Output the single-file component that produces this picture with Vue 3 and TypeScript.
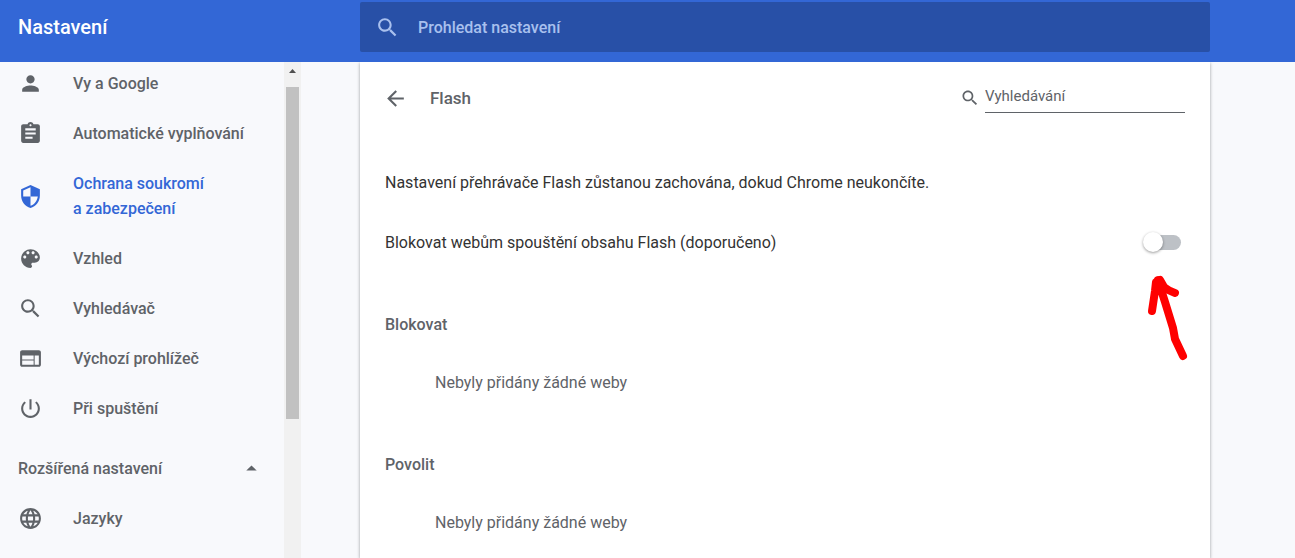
<script setup lang="ts">
import { ref } from 'vue'

interface NavItem {
  label: string
  icon: string
  active?: boolean
}

const searchIcon =
  'M15.5 14h-.79l-.28-.27C15.41 12.59 16 11.11 16 9.5 16 5.91 13.09 3 9.5 3S3 5.91 3 9.5 5.91 16 9.5 16c1.61 0 3.09-.59 4.23-1.57l.27.28v.79l5 4.99L20.49 19l-4.99-5zm-6 0C7.01 14 5 11.99 5 9.5S7.01 5 9.5 5 14 7.01 14 9.5 11.99 14 9.5 14z'

const items: NavItem[] = [
  {
    label: 'Vy a Google',
    icon: 'M12 12c2.21 0 4-1.79 4-4s-1.79-4-4-4-4 1.79-4 4 1.79 4 4 4zm0 2c-2.67 0-8 1.34-8 4v2h16v-2c0-2.66-5.33-4-8-4z',
  },
  {
    label: 'Automatické vyplňování',
    icon: 'M19 3h-4.18C14.4 1.84 13.3 1 12 1c-1.3 0-2.4.84-2.82 2H5c-1.1 0-2 .9-2 2v14c0 1.1.9 2 2 2h14c1.1 0 2-.9 2-2V5c0-1.1-.9-2-2-2zm-7 0c.55 0 1 .45 1 1s-.45 1-1 1-1-.45-1-1 .45-1 1-1zm2 14H7v-2h7v2zm3-4H7v-2h10v2zm0-4H7V7h10v2z',
  },
  {
    label: 'Ochrana soukromí a\u00a0zabezpečení',
    icon: 'M12 1L3 5v6c0 5.55 3.84 10.74 9 12 5.16-1.26 9-6.45 9-12V5l-9-4zm0 10.99h7c-.53 4.12-3.28 7.79-7 8.94V12H5V6.3l7-3.11v8.8z',
    active: true,
  },
  {
    label: 'Vzhled',
    icon: 'M12 3c-4.97 0-9 4.03-9 9s4.03 9 9 9c.83 0 1.5-.67 1.5-1.5 0-.39-.15-.74-.39-1.01-.23-.26-.38-.61-.38-.99 0-.83.67-1.5 1.5-1.5H16c2.76 0 5-2.24 5-5 0-4.42-4.03-8-9-8zm-5.5 9c-.83 0-1.5-.67-1.5-1.5S5.67 9 6.5 9 8 9.67 8 10.5 7.33 12 6.5 12zm3-4C8.67 8 8 7.33 8 6.5S8.67 5 9.5 5s1.5.67 1.5 1.5S10.33 8 9.5 8zm5 0c-.83 0-1.5-.67-1.5-1.5S13.67 5 14.5 5s1.5.67 1.5 1.5S15.33 8 14.5 8zm3 4c-.83 0-1.5-.67-1.5-1.5S16.67 9 17.5 9s1.5.67 1.5 1.5-.67 1.5-1.5 1.5z',
  },
  { label: 'Vyhledávač', icon: searchIcon },
  {
    label: 'Výchozí prohlížeč',
    icon: 'M20 4H4c-1.1 0-1.99.9-1.99 2L2 18c0 1.1.9 2 2 2h16c1.1 0 2-.9 2-2V6c0-1.1-.9-2-2-2zm-5 14H4v-4h11v4zm0-5H4V9h11v4zm5 5h-4V9h4v9z',
  },
  {
    label: 'Při spuštění',
    icon: 'M13 3h-2v10h2V3zm4.83 2.17l-1.42 1.42C17.99 7.86 19 9.81 19 12c0 3.87-3.13 7-7 7s-7-3.13-7-7c0-2.19 1.01-4.14 2.58-5.42L6.17 5.17C4.23 6.82 3 9.26 3 12c0 4.97 4.03 9 9 9s9-4.03 9-9c0-2.74-1.23-5.18-3.17-6.83z',
  },
]

const advanced: NavItem[] = [
  {
    label: 'Jazyky',
    icon: 'M11.99 2C6.47 2 2 6.48 2 12s4.47 10 9.99 10C17.52 22 22 17.52 22 12S17.52 2 11.99 2zm6.93 6h-2.95c-.32-1.25-.78-2.45-1.38-3.56 1.84.63 3.37 1.91 4.33 3.56zM12 4.04c.83 1.2 1.48 2.53 1.91 3.96h-3.82c.43-1.43 1.08-2.76 1.91-3.96zM4.26 14C4.1 13.36 4 12.69 4 12s.1-1.36.26-2h3.38c-.08.66-.14 1.32-.14 2s.06 1.34.14 2H4.26zm.82 2h2.95c.32 1.25.78 2.45 1.38 3.56-1.84-.63-3.37-1.9-4.33-3.56zm2.95-8H5.08c.96-1.66 2.49-2.93 4.33-3.56C8.81 5.55 8.35 6.75 8.03 8zM12 19.96c-.83-1.2-1.48-2.53-1.91-3.96h3.82c-.43 1.43-1.08 2.76-1.91 3.96zM14.34 14H9.66c-.09-.66-.16-1.32-.16-2s.07-1.35.16-2h4.68c.09.65.16 1.32.16 2s-.07 1.34-.16 2zm.25 5.56c.6-1.11 1.06-2.31 1.38-3.56h2.95c-.96 1.65-2.49 2.93-4.33 3.56zM16.36 14c.08-.66.14-1.32.14-2s-.06-1.34-.14-2h3.38c.16.64.26 1.31.26 2s-.1 1.36-.26 2h-3.38z',
  },
]

const siteLists = [
  { title: 'Blokovat', empty: 'Nebyly přidány žádné weby' },
  { title: 'Povolit', empty: 'Nebyly přidány žádné weby' },
]

const query = ref('')
const siteQuery = ref('')
const blockFlash = ref(false)
const expanded = ref(true)
</script>

<template>
  <div class="page">
    <header class="toolbar">
      <h1 class="title">Nastavení</h1>
      <div class="toolbar-main">
        <label class="global-search">
          <svg class="icon" viewBox="0 0 24 24" aria-hidden="true"><path :d="searchIcon" /></svg>
          <input v-model="query" type="text" placeholder="Prohledat nastavení" aria-label="Prohledat nastavení" />
        </label>
      </div>
    </header>

    <div class="body">
      <aside class="sidebar">
        <nav class="menu">
          <a v-for="item in items" :key="item.label" href="#" class="item" :class="{ active: item.active }">
            <svg class="icon" viewBox="0 0 24 24" aria-hidden="true"><path :d="item.icon" /></svg>
            <span class="item-label">{{ item.label }}</span>
          </a>
          <button type="button" class="advanced" :aria-expanded="expanded" @click="expanded = !expanded">
            <span>Rozšířená nastavení</span>
            <svg class="icon" viewBox="0 0 24 24" aria-hidden="true"><path d="M7 14l5-5 5 5z" /></svg>
          </button>
          <template v-if="expanded">
            <a v-for="item in advanced" :key="item.label" href="#" class="item">
              <svg class="icon" viewBox="0 0 24 24" aria-hidden="true"><path :d="item.icon" /></svg>
              <span class="item-label">{{ item.label }}</span>
            </a>
          </template>
        </nav>
        <div class="scrollbar" aria-hidden="true">
          <svg class="scroll-arrow" viewBox="0 0 17 17"><path d="M5 11l3.5-4 3.5 4z" /></svg>
          <div class="scroll-thumb"></div>
        </div>
      </aside>

      <main class="main">
        <section class="card">
          <div class="card-head">
            <button type="button" class="back" aria-label="Zpět">
              <svg class="icon" viewBox="0 0 24 24" aria-hidden="true">
                <path d="M20 11H7.83l5.59-5.59L12 4l-8 8 8 8 1.41-1.41L7.83 13H20v-2z" />
              </svg>
            </button>
            <h2 class="card-title">Flash</h2>
            <label class="site-search">
              <svg class="icon small" viewBox="0 0 24 24" aria-hidden="true"><path :d="searchIcon" /></svg>
              <input v-model="siteQuery" type="text" placeholder="Vyhledávání" aria-label="Vyhledávání" />
            </label>
          </div>

          <p class="row">Nastavení přehrávače Flash zůstanou zachována, dokud Chrome neukončíte.</p>

          <div class="row toggle-row">
            <label for="block-flash">Blokovat webům spouštění obsahu Flash (doporučeno)</label>
            <input id="block-flash" v-model="blockFlash" type="checkbox" class="toggle" />
            <svg class="marker" viewBox="0 0 50 95" aria-hidden="true">
              <path d="M12 42L15 22L16 13L20 11L24 18Q29 22 35 24M18 11L25 33L33 59L35 70L43 87" />
            </svg>
          </div>

          <section v-for="list in siteLists" :key="list.title" class="site-list">
            <h3 class="list-title">{{ list.title }}</h3>
            <p class="list-empty">{{ list.empty }}</p>
          </section>
        </section>
      </main>
    </div>
  </div>
</template>

<style>
body {
  margin: 0;
}
</style>

<style scoped>
.page {
  display: flex;
  flex-direction: column;
  height: 100vh;
  overflow: hidden;
  background: #f8f9fc;
  color: #333;
  font-family: Roboto, "Noto Sans", sans-serif;
  font-size: 16px;
  line-height: 25px;
}

h1,
h2,
h3,
p {
  margin: 0;
}

button,
input {
  font: inherit;
  color: inherit;
}

button {
  padding: 0;
  border: 0;
  background: none;
  cursor: pointer;
}

.icon {
  flex: none;
  width: 25px;
  height: 25px;
  fill: currentColor;
}

.toolbar {
  display: grid;
  grid-template-columns: 301px 1fr;
  flex: none;
  height: 62px;
  background: #3367d6;
  color: #fff;
}

.title {
  padding: 15px 18px 0;
  font-size: 20px;
  font-weight: 500;
}

.toolbar-main {
  padding: 2px 85px 10px 59px;
}

.global-search {
  display: flex;
  align-items: center;
  gap: 18px;
  height: 50px;
  padding: 0 15px;
  border-radius: 2px;
  background: #2850a7;
  color: #a9c0ee;
}

.global-search input {
  flex: 1;
  min-width: 0;
  padding: 0;
  border: 0;
  outline: 0;
  background: none;
  font-weight: 500;
}

input::placeholder {
  color: inherit;
  opacity: 1;
}

.body {
  display: grid;
  grid-template-columns: 301px 1fr;
  flex: 1;
  min-height: 0;
}

.sidebar {
  display: flex;
  min-height: 0;
  overflow: hidden;
}

.menu {
  flex: 1;
  min-width: 0;
  margin-top: -4px;
  color: #5f6368;
  font-weight: 500;
}

.item {
  display: flex;
  align-items: center;
  gap: 30px;
  min-height: 50px;
  padding: 13px 30px 12px 18px;
  box-sizing: border-box;
  color: inherit;
  text-decoration: none;
}

.item-label {
  max-width: 180px;
}

.item.active {
  color: #3367d6;
}

.advanced {
  display: flex;
  align-items: center;
  justify-content: space-between;
  width: 100%;
  height: 50px;
  margin-top: 10px;
  padding: 0 20px 0 18px;
}

.scrollbar {
  display: flex;
  flex-direction: column;
  align-items: center;
  flex: none;
  width: 17px;
  background: #f1f1f1;
}

.scroll-arrow {
  flex: none;
  width: 17px;
  height: 17px;
  margin-bottom: 8px;
  fill: #505050;
}

.scroll-thumb {
  width: 13px;
  height: 67%;
  background: #c1c1c1;
}

.main {
  padding: 0 85px 0 59px;
}

.card {
  height: 100%;
  background: #fff;
  box-shadow: 0 1px 3px rgba(60, 64, 67, 0.5);
  clip-path: inset(0 -5px);
}

.card-head {
  display: flex;
  align-items: center;
  height: 72px;
  margin-bottom: 18px;
  padding: 0 25px 0 23px;
  color: #5f6368;
}

.back {
  display: flex;
  margin-right: 22px;
}

.card-title {
  flex: 1;
  font-size: 17px;
  font-weight: 500;
}

.site-search {
  display: flex;
  align-items: center;
  gap: 5px;
}

.icon.small {
  width: 20px;
  height: 20px;
}

.site-search input {
  width: 200px;
  height: 30px;
  padding: 0 0 3px;
  border: 0;
  border-bottom: 1px solid #5f6368;
  outline: 0;
  box-sizing: border-box;
  background: none;
  font-size: 15px;
}

.row {
  display: flex;
  align-items: center;
  height: 60px;
  padding: 0 25px;
}

.toggle-row {
  position: relative;
  justify-content: space-between;
}

.toggle {
  position: relative;
  width: 34px;
  height: 15px;
  margin: 0 4px 0 0;
  border-radius: 8px;
  appearance: none;
  background: #bdc1c6;
  cursor: pointer;
}

.toggle::before {
  position: absolute;
  top: -3px;
  left: -4px;
  width: 20px;
  height: 20px;
  border-radius: 50%;
  background: #fff;
  box-shadow: 0 1px 3px rgba(0, 0, 0, 0.4);
  content: "";
}

.toggle:checked {
  background: #8ab4f8;
}

.toggle:checked::before {
  left: 18px;
  background: #1a73e8;
}

.marker {
  position: absolute;
  top: 57px;
  right: 20px;
  width: 50px;
  height: 95px;
  fill: none;
  stroke: #fe0000;
  stroke-width: 8;
  stroke-linecap: round;
  stroke-linejoin: round;
  pointer-events: none;
}

.site-list {
  padding: 40px 25px 0;
  color: #5f6368;
}

.list-title {
  height: 40px;
  font-size: 16px;
  font-weight: 500;
}

.list-empty {
  display: flex;
  align-items: center;
  height: 60px;
  padding-left: 50px;
}
</style>
